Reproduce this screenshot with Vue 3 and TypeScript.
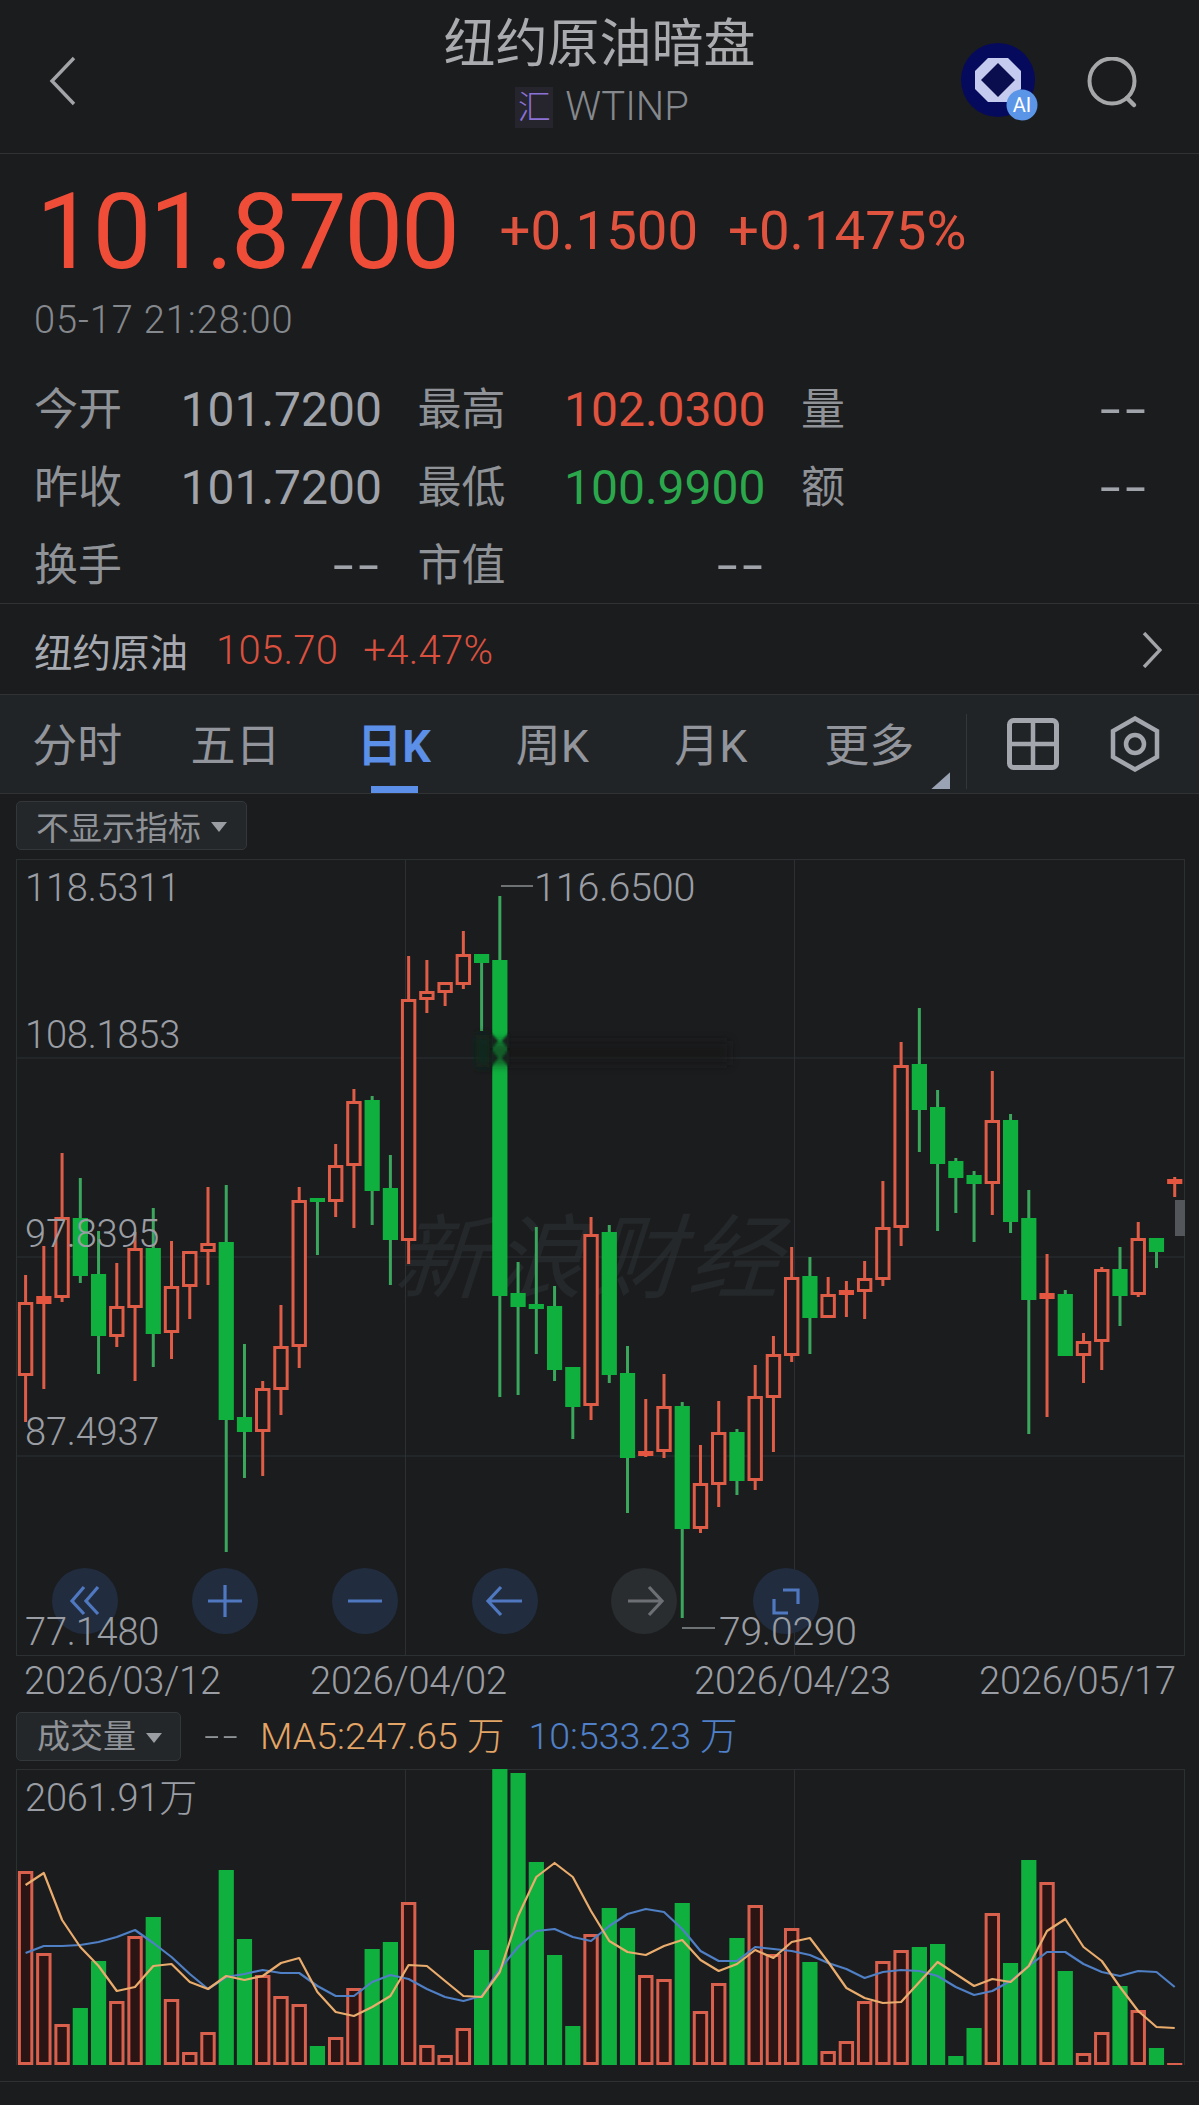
<script setup lang="ts">
type Candle = [number, number, number, number, 'r' | 'g']

// high, body top, body bottom, low (page px), colour
const candles: Candle[] = [
  [1276, 1303, 1377, 1423, 'r'], [1247, 1297, 1305, 1390, 'r'], [1154, 1218, 1299, 1303, 'r'], [1179, 1219, 1277, 1284, 'g'],
  [1232, 1275, 1337, 1375, 'g'], [1264, 1307, 1338, 1348, 'r'], [1233, 1249, 1309, 1382, 'r'], [1209, 1249, 1335, 1368, 'g'],
  [1242, 1287, 1334, 1360, 'r'], [1252, 1252, 1288, 1320, 'r'], [1188, 1244, 1253, 1286, 'r'], [1186, 1243, 1421, 1553, 'g'],
  [1345, 1418, 1433, 1479, 'g'], [1382, 1389, 1433, 1477, 'r'], [1306, 1347, 1391, 1416, 'r'], [1188, 1201, 1348, 1369, 'r'],
  [1199, 1199, 1203, 1256, 'g'], [1145, 1166, 1203, 1218, 'r'], [1090, 1102, 1167, 1229, 'r'], [1097, 1101, 1192, 1226, 'g'],
  [1156, 1189, 1241, 1286, 'g'], [957, 1000, 1242, 1265, 'r'], [961, 992, 1001, 1014, 'r'], [983, 983, 994, 1007, 'r'],
  [932, 955, 986, 990, 'r'], [955, 955, 964, 1032, 'g'], [897, 961, 1297, 1398, 'g'], [1263, 1294, 1308, 1396, 'g'],
  [1228, 1305, 1310, 1355, 'g'], [1287, 1307, 1371, 1382, 'g'], [1368, 1368, 1408, 1440, 'g'], [1218, 1235, 1407, 1421, 'r'],
  [1226, 1233, 1376, 1384, 'g'], [1347, 1374, 1459, 1514, 'g'], [1400, 1452, 1457, 1458, 'r'], [1375, 1407, 1453, 1459, 'r'],
  [1403, 1407, 1530, 1619, 'g'], [1446, 1484, 1530, 1534, 'r'], [1402, 1433, 1486, 1508, 'r'], [1430, 1433, 1482, 1496, 'g'],
  [1366, 1397, 1482, 1491, 'r'], [1337, 1355, 1399, 1453, 'r'], [1248, 1278, 1357, 1363, 'r'], [1258, 1277, 1319, 1355, 'g'],
  [1278, 1295, 1319, 1319, 'r'], [1282, 1291, 1296, 1318, 'r'], [1262, 1279, 1293, 1320, 'r'], [1182, 1228, 1281, 1287, 'r'],
  [1043, 1066, 1229, 1247, 'r'], [1009, 1065, 1111, 1153, 'g'], [1091, 1108, 1165, 1232, 'g'], [1159, 1162, 1179, 1214, 'g'],
  [1172, 1176, 1185, 1243, 'g'], [1072, 1121, 1185, 1216, 'r'], [1115, 1121, 1223, 1234, 'g'], [1191, 1219, 1301, 1435, 'g'],
  [1255, 1294, 1300, 1418, 'r'], [1291, 1295, 1357, 1357, 'g'], [1334, 1342, 1357, 1384, 'r'], [1268, 1270, 1343, 1371, 'r'],
  [1248, 1270, 1297, 1327, 'g'], [1223, 1239, 1296, 1298, 'r'], [1239, 1239, 1253, 1269, 'g'], [1178, 1180, 1185, 1198, 'r'],
]

const volTops = [
  1872, 1954, 2025, 2009, 1962, 2002, 1937, 1918, 2000, 2053, 2033, 1871, 1940, 1976, 1997, 2005,
  2047, 2038, 1989, 1950, 1943, 1903, 2046, 2056, 2029, 1951, 1770, 1774, 1863, 1956, 2027, 1935,
  1909, 1929, 1976, 1980, 1904, 2012, 1984, 1939, 1906, 1955, 1929, 1963, 2052, 2042, 2002, 1962,
  1951, 1948, 1945, 2057, 2029, 1914, 1964, 1861, 1883, 1972, 2054, 2033, 1987, 2011, 2049, 2064,
]

const ma5 = [
  1886, 1874, 1921, 1948, 1967, 1992, 1988, 1967, 1965, 1983, 1990, 1977, 1981, 1977, 1964, 1959,
  1993, 2013, 2017, 2008, 1997, 1966, 1967, 1982, 1997, 1998, 1973, 1917, 1878, 1864, 1878, 1912,
  1942, 1953, 1956, 1947, 1941, 1961, 1972, 1965, 1951, 1959, 1943, 1939, 1963, 1989, 1999, 2004,
  2003, 1983, 1963, 1975, 1987, 1980, 1983, 1967, 1932, 1920, 1948, 1962, 1988, 2012, 2028, 2029,
]

const ma10 = [
  1954, 1947, 1947, 1946, 1943, 1938, 1931, 1944, 1958, 1975, 1990, 1978, 1975, 1971, 1974, 1974,
  1987, 1997, 1997, 1983, 1976, 1980, 1990, 1998, 2002, 1997, 1970, 1948, 1932, 1930, 1938, 1942,
  1927, 1915, 1910, 1913, 1930, 1952, 1962, 1962, 1948, 1950, 1952, 1956, 1964, 1970, 1979, 1973,
  1971, 1972, 1977, 1988, 1996, 1992, 1982, 1967, 1953, 1953, 1965, 1973, 1977, 1972, 1973, 1988,
]

const stats = [
  [
    { label: '今开', value: '101.7200', tone: '' },
    { label: '最高', value: '102.0300', tone: 'up' },
    { label: '量', value: '--', tone: 'dash' },
  ],
  [
    { label: '昨收', value: '101.7200', tone: '' },
    { label: '最低', value: '100.9900', tone: 'down' },
    { label: '额', value: '--', tone: 'dash' },
  ],
  [
    { label: '换手', value: '--', tone: 'dash' },
    { label: '市值', value: '--', tone: 'dash' },
  ],
]

const tabs = ['分时', '五日', '日K', '周K', '月K', '更多']

const priceLabels = [
  { text: '118.5311', x: 25, y: 902, cls: '' },
  { text: '108.1853', x: 25, y: 1049, cls: '' },
  { text: '97.8395', x: 25, y: 1248, cls: '' },
  { text: '87.4937', x: 25, y: 1446, cls: '' },
  { text: '77.1480', x: 25, y: 1646, cls: '' },
  { text: '116.6500', x: 534, y: 902, cls: 'big' },
  { text: '79.0290', x: 719, y: 1646, cls: 'mid' },
]

const dateLabels = [
  { text: '2026/03/12', x: 24 },
  { text: '2026/04/02', x: 310 },
  { text: '2026/04/23', x: 694 },
  { text: '2026/05/17', x: 979 },
]

const buttons = [
  { x: 85, muted: false },
  { x: 225, muted: false },
  { x: 365, muted: false },
  { x: 505, muted: false },
  { x: 644, muted: true },
  { x: 786, muted: false },
]

const cx = (i: number) => 25.6 + 18.24 * i
const line = (ys: number[]) => ys.map((y, i) => `${cx(i).toFixed(1)},${y}`).join(' ')
</script>

<template>
  <div class="page">
    <header class="topbar">
      <div class="topbar-left">
        <svg width="27" height="50" viewBox="0 0 27 50">
          <path d="M25 2 3 25l22 23" fill="none" stroke="#a2a4a7" stroke-width="3.4" />
        </svg>
      </div>
      <div class="title-box">
        <div class="title">纽约原油暗盘</div>
        <div class="subtitle"><span class="market">汇</span><span>WTINP</span></div>
      </div>
      <div class="topbar-right">
        <svg class="ai" width="80" height="80" viewBox="0 0 80 80">
          <circle cx="38" cy="38" r="37" fill="#060a5c" />
          <path d="M28 16h20l13 13v18L48 60H28L15 47V29z" fill="#c4cbee" />
          <path d="M38 21 55 38 38 55 21 38z" fill="#0a0d4e" />
          <circle cx="62" cy="63" r="15.5" fill="#5a95e8" />
          <text x="62" y="70" text-anchor="middle" class="ai-text">AI</text>
        </svg>
        <svg width="52" height="52" viewBox="0 0 52 52">
          <circle cx="25" cy="24" r="22.5" fill="none" stroke="#a5a7a9" stroke-width="4" />
          <path d="m40 41 7 7" stroke="#a5a7a9" stroke-width="4.5" stroke-linecap="round" />
        </svg>
      </div>
    </header>

    <section class="quote">
      <div class="price-row">
        <span class="price">101.8700</span>
        <span class="change">+0.1500</span>
        <span class="change">+0.1475%</span>
      </div>
      <div class="time">05-17 21:28:00</div>
      <div class="stats">
        <template v-for="(row, r) in stats" :key="r">
          <div v-for="cell in row" :key="cell.label" class="stat">
            <span class="stat-label">{{ cell.label }}</span>
            <span class="stat-value" :class="cell.tone">{{ cell.value }}</span>
          </div>
        </template>
      </div>
    </section>

    <section class="linked">
      <span class="linked-name">纽约原油</span>
      <span class="linked-num">105.70</span>
      <span class="linked-num">+4.47%</span>
      <svg class="linked-arrow" width="20" height="36" viewBox="0 0 20 36">
        <path d="m2 1 16 17L2 35" fill="none" stroke="#a2a4a7" stroke-width="3.4" />
      </svg>
    </section>

    <nav class="tabs">
      <div class="tab-list">
        <div v-for="tab in tabs" :key="tab" class="tab" :class="{ active: tab === '日K', more: tab === '更多' }">
          {{ tab }}
        </div>
      </div>
      <div class="tab-tools">
        <svg width="52" height="52" viewBox="0 0 52 52">
          <rect x="2.500" y="2.500" width="47" height="47" rx="4" fill="none" stroke="#a3a6ac" stroke-width="5" />
          <path d="M26 2v48M2 26h48" stroke="#a3a6ac" stroke-width="4.500" />
        </svg>
        <svg width="50" height="56" viewBox="0 0 50 56">
          <path d="M25 2.500 47 15v26L25 53.500 3 41V15z" fill="none" stroke="#a3a6ac" stroke-width="4.500" />
          <circle cx="25" cy="28" r="9" fill="none" stroke="#a3a6ac" stroke-width="4.500" />
        </svg>
      </div>
    </nav>

    <div class="picker-row">
      <div class="picker">不显示指标<i class="caret"></i></div>
    </div>

    <svg class="kline" width="1199" height="848" viewBox="0 860 1199 848">
      <defs>
        <filter id="soft" x="-20%" y="-50%" width="140%" height="200%">
          <feGaussianBlur stdDeviation="4" />
        </filter>
        <filter id="soft-small" x="-50%" y="-50%" width="200%" height="200%">
          <feGaussianBlur stdDeviation="1" />
        </filter>
      </defs>

      <text x="410" y="1292" class="watermark" transform="skewX(-18) translate(402 0)">新浪财经</text>

      <g class="grid">
        <rect x="16.500" y="860.500" width="1168" height="796" fill="none" />
        <path d="M16 1059h1169M16 1258h1169M16 1457h1169M405.500 860v796M794.500 860v796" />
      </g>

      <g v-for="(c, i) in candles" :key="i">
        <template v-if="c[4] === 'r'">
          <path :d="`M${cx(i)} ${c[0]}V${c[1]}M${cx(i)} ${c[2]}V${c[3]}`" class="wick-up" />
          <rect v-if="c[2] - c[1] > 8" :x="cx(i) - 6.2" :y="c[1] + 1.5" width="12.400" :height="c[2] - c[1] - 3" class="body-up" />
          <rect v-else :x="cx(i) - 7.6" :y="c[1]" width="15.200" :height="c[2] - c[1]" fill="#e4563f" />
        </template>
        <template v-else>
          <path :d="`M${cx(i)} ${c[0]}V${c[1]}M${cx(i)} ${c[2]}V${c[3]}`" class="wick-down" />
          <rect :x="cx(i) - 7.6" :y="c[1]" width="15.200" :height="c[2] - c[1]" fill="#10b03f" />
        </template>
      </g>

      <rect x="1175" y="1201" width="10" height="36" fill="#53575b" />

      <rect x="484" y="1042" width="246" height="24" fill="#151617" opacity="0.55" filter="url(#soft)" />
      <rect x="476" y="1036" width="14" height="32" fill="#10291a" filter="url(#soft)" />
      <g fill="#13201a" filter="url(#soft-small)">
        <path d="m491 1034 7 8-7 8zM491 1050l7 9-7 9zM509 1034l-7 8 7 8zM509 1050l-7 9 7 9z" />
      </g>

      <g v-for="b in buttons" :key="b.x">
        <circle :cx="b.x" cy="1602" r="33" :fill="b.muted ? '#2a2d30' : '#212d3f'" />
      </g>
      <g class="btn-icon">
        <path d="M84 1588 72 1602l12 13M98 1588l-12 14 12 13" />
        <path d="M225 1586v32M208 1602h34" />
        <path d="M348 1602h34" />
        <path d="M522 1602h-34M501 1588l-13 14 13 14" />
        <path class="muted" d="M628 1602h34M649 1588l13 14-13 14" />
        <path d="M783 1591h15v14M774 1600v14h14" />
      </g>

      <path d="M501 887h32M682 1629h33" stroke="#8b8e92" stroke-width="1.500" />
      <text v-for="p in priceLabels" :key="p.text" :x="p.x" :y="p.y" class="axis" :class="p.cls">{{ p.text }}</text>
      <text v-for="d in dateLabels" :key="d.text" :x="d.x" y="1695" class="axis">{{ d.text }}</text>
    </svg>

    <div class="vol-row">
      <div class="picker picker-vol">成交量<i class="caret"></i></div>
      <span class="vol-dash">--</span>
      <span class="vol-ma5">MA5:247.65 万</span>
      <span class="vol-ma10">10:533.23 万</span>
    </div>

    <svg class="vol" width="1199" height="312" viewBox="0 1770 1199 312">
      <g class="grid">
        <path d="M16 1770.500h1169M16.500 1770v296M405.500 1770v296M794.500 1770v296M1184.500 1770v296" />
      </g>
      <g v-for="(top, i) in volTops" :key="i">
        <template v-if="candles[i][4] === 'r'">
          <rect v-if="2066 - top > 5" :x="cx(i) - 6.2" :y="top + 1.5" width="12.400" :height="2066 - top - 3" class="vol-up" />
          <rect v-else :x="cx(i) - 7.6" :y="top" width="15.200" :height="2066 - top" fill="#d9604d" />
        </template>
        <rect v-else :x="cx(i) - 7.6" :y="top" width="15.200" :height="2066 - top" fill="#10b03f" />
      </g>
      <polyline :points="line(ma10)" class="ma ma-blue" />
      <polyline :points="line(ma5)" class="ma ma-orange" />
      <text x="25" y="1812" class="axis">2061.91万</text>
    </svg>

    <div class="foot"></div>
  </div>
</template>

<style scoped>
.page {
  width: 1199px;
  height: 2105px;
  overflow: hidden;
  background: #1b1c1e;
  color: #a6aab0;
  font-family: Roboto, "Noto Sans CJK SC", sans-serif;
}

.topbar {
  height: 153px;
  display: grid;
  grid-template-columns: 1fr auto 1fr;
  border-bottom: 1px solid #313234;
}

.topbar-left {
  padding: 56px 0 0 49px;
}

.topbar-right {
  display: flex;
  justify-content: flex-end;
  align-items: flex-start;
  gap: 47px;
  padding: 42px 60px 0 0;
}

.topbar-right svg:last-child {
  margin-top: 15px;
}

.ai-text {
  fill: #fff;
  font-size: 20px;
}

.title-box {
  display: flex;
  flex-direction: column;
  align-items: center;
  padding-top: 15px;
}

.title {
  font-size: 52px;
  line-height: 60px;
  color: #a9abae;
}

.subtitle {
  display: flex;
  align-items: center;
  gap: 12px;
  margin-top: 11px;
  padding-left: 5px;
  font-size: 40px;
  line-height: 42px;
  font-weight: 300;
  color: #85888c;
}

.market {
  width: 38px;
  height: 41px;
  line-height: 41px;
  text-align: center;
  font-size: 33px;
  background: #26252e;
  color: #8d72d6;
}

.quote {
  height: 449px;
  padding-left: 34px;
}

.price-row {
  display: flex;
  align-items: center;
  height: 135px;
  padding-top: 11px;
  color: #e0533f;
}

.price {
  margin: 0 42px 0 2px;
  font-size: 105px;
  line-height: 135px;
  letter-spacing: -2.400px;
  color: #f04d38;
}

.change {
  margin: 0 30px 5px 0;
  font-size: 54.500px;
}

.time {
  margin-top: -2px;
  font-size: 38px;
  line-height: 44px;
  font-weight: 300;
  letter-spacing: 0.900px;
  color: #85888c;
}

.stats {
  display: grid;
  grid-template-columns: repeat(3, 347px);
  column-gap: 36.500px;
  grid-auto-rows: 78px;
  margin-top: 27px;
}

.stat {
  display: flex;
  justify-content: space-between;
  align-items: center;
}

.stat-label {
  margin-bottom: 4px;
  font-size: 44px;
  color: #8f9296;
}

.stat-value {
  margin: 2px -1px 0 0;
  font-size: 48px;
  color: #a0a4aa;
}

.stat-value.up {
  color: #e0533f;
}

.stat-value.down {
  color: #2ba84c;
}

.stat-value.dash {
  transform: scaleX(1.55);
  transform-origin: right center;
  letter-spacing: 3px;
  margin-right: -3px;
}

.linked {
  height: 91px;
  display: flex;
  align-items: center;
  padding: 2px 0 0 34px;
  border-top: 1px solid #313234;
  box-sizing: border-box;
}

.linked-name {
  font-size: 38.500px;
  color: #a6aab0;
  margin-right: 28px;
}

.linked-num {
  font-size: 40px;
  font-weight: 300;
  letter-spacing: 0.300px;
  color: #d9503f;
  margin-right: 25px;
}

.linked-arrow {
  margin: 0 37px 0 auto;
}

.tabs {
  height: 100px;
  display: flex;
  background: #212427;
  border-top: 1px solid #313234;
  border-bottom: 1px solid #313234;
  box-sizing: border-box;
}

.tab-list {
  display: flex;
  width: 967px;
  position: relative;
}

.tab-list::after {
  content: "";
  position: absolute;
  right: 0;
  top: 19px;
  width: 1px;
  height: 75px;
  background: #34373a;
}

.tab {
  position: relative;
  width: 158.400px;
  flex: none;
  text-align: center;
  font-size: 45px;
  line-height: 104px;
  color: #92959b;
}

.tab:first-child {
  margin-left: -2px;
}

.tab.active {
  color: #5b8fe8;
  font-weight: 700;
}

.tab.active::after {
  content: "";
  position: absolute;
  left: 50%;
  bottom: 0;
  width: 47px;
  height: 7px;
  margin-left: -23px;
  background: #5b8fe8;
}

.tab.more::after {
  content: "";
  position: absolute;
  right: -2px;
  bottom: 4px;
  width: 19px;
  height: 17px;
  background: #9aa3b3;
  clip-path: polygon(100% 0, 100% 100%, 0 100%);
}

.tab-tools {
  display: flex;
  align-items: center;
  padding-left: 40px;
  gap: 51px;
  margin-top: -1px;
}

.picker-row {
  height: 65px;
  padding: 7px 0 0 16px;
  box-sizing: border-box;
}

.picker {
  display: inline-flex;
  align-items: center;
  height: 49px;
  padding: 0 19px;
  font-size: 33px;
  color: #8f9296;
  background: #24272a;
  border: 1px solid #34373a;
  border-radius: 5px;
  box-sizing: border-box;
}

.caret {
  width: 0;
  height: 0;
  margin-left: 10px;
  margin-top: 3px;
  border: 8px solid transparent;
  border-top: 10px solid #9a9da2;
  border-bottom: 0;
}

.kline,
.vol {
  display: block;
}

.grid {
  fill: none;
  stroke: #2d3032;
  stroke-width: 1;
}

.watermark {
  font-size: 92px;
  letter-spacing: 6px;
  fill: #25282a;
}

.wick-up {
  stroke: #df5c47;
  stroke-width: 3;
  fill: none;
}

.wick-down {
  stroke: #3aa75c;
  stroke-width: 3;
  fill: none;
}

.body-up {
  fill: #1d1a1b;
  stroke: #df5c47;
  stroke-width: 3;
}

.btn-icon {
  fill: none;
  stroke: #4f78c0;
  stroke-width: 3.200;
}

.btn-icon .muted {
  stroke: #6c6f73;
}

.axis {
  font-size: 38px;
  font-weight: 300;
  letter-spacing: -0.200px;
  fill: #9a9ea4;
}

.axis.big {
  font-size: 39.500px;
}

.axis.mid {
  font-size: 39px;
}

.vol-row {
  height: 62px;
  display: flex;
  align-items: flex-start;
  padding: 5px 0 0 16px;
  box-sizing: border-box;
  font-size: 37.500px;
  line-height: 49px;
  font-weight: 300;
  white-space: nowrap;
}

.picker-vol {
  font-size: 33px;
  font-weight: 400;
  padding: 0 18px 0 20px;
}

.vol-dash {
  flex: none;
  width: 29px;
  margin-left: 23px;
  letter-spacing: 2px;
  color: #8f9296;
  transform: scaleX(1.45);
  transform-origin: left center;
}

.vol-ma5 {
  margin-left: 27px;
  color: #e3a566;
}

.vol-ma10 {
  margin-left: 24px;
  color: #4f80c8;
}

.vol-up {
  fill: #2a1514;
  stroke: #d9604d;
  stroke-width: 3;
}

.ma {
  fill: none;
  stroke-width: 2.200;
  stroke-linejoin: round;
}

.ma-blue {
  stroke: #4f7fc4;
}

.ma-orange {
  stroke: #eaac6c;
}

.foot {
  height: 23px;
  border-top: 1px solid #2f3032;
  box-sizing: border-box;
}
</style>
